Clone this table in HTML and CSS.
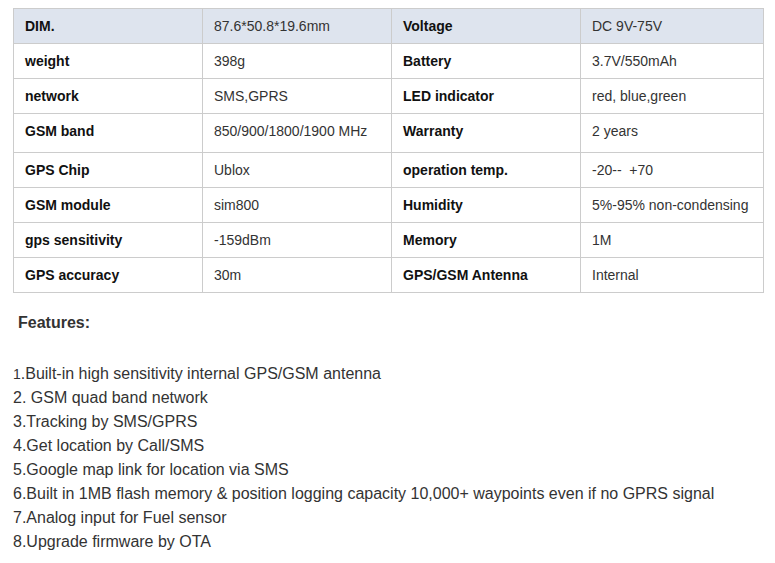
FILE: index.html
```html
<!DOCTYPE html>
<html>
<head>
<meta charset="utf-8">
<link rel="stylesheet" href="styles.css">
</head>
<body>
<div class="page">
  <table class="specs">
    <colgroup>
      <col class="c1"><col class="c2"><col class="c3"><col class="c4">
    </colgroup>
    <tr class="head">
      <th>DIM.</th><td>87.6*50.8*19.6mm</td><th>Voltage</th><td>DC 9V-75V</td>
    </tr>
    <tr>
      <th>weight</th><td>398g</td><th>Battery</th><td>3.7V/550mAh</td>
    </tr>
    <tr>
      <th>network</th><td>SMS,GPRS</td><th>LED indicator</th><td>red, blue,green</td>
    </tr>
    <tr class="tall">
      <th>GSM band</th><td>850/900/1800/1900 MHz</td><th>Warranty</th><td>2 years</td>
    </tr>
    <tr>
      <th>GPS Chip</th><td>Ublox</td><th>operation temp.</th><td>-20--&nbsp; +70</td>
    </tr>
    <tr>
      <th>GSM module</th><td>sim800</td><th>Humidity</th><td>5%-95% non-condensing</td>
    </tr>
    <tr>
      <th>gps sensitivity</th><td>-159dBm</td><th>Memory</th><td>1M</td>
    </tr>
    <tr>
      <th>GPS accuracy</th><td>30m</td><th>GPS/GSM Antenna</th><td>Internal</td>
    </tr>
  </table>

  <div class="features-title">Features:</div>

  <div class="features">
    <p><span class="small">1</span>.Built-in high sensitivity internal GPS/GSM antenna</p>
    <p>2. GSM quad band network</p>
    <p>3.Tracking by SMS/GPRS</p>
    <p>4.Get location by Call/SMS</p>
    <p>5.Google map link for location via SMS</p>
    <p>6.Built in 1MB flash memory &amp; position logging capacity 10,000+ waypoints even if no GPRS signal</p>
    <p>7.Analog input for Fuel sensor</p>
    <p>8.Upgrade firmware by OTA</p>
  </div>
</div>
</body>
</html>
```

FILE: styles.css
```css
html, body {
  margin: 0;
  padding: 0;
  background: #ffffff;
}

.page {
  padding: 8px 0 0 13px;
  font-family: "Liberation Sans", Arial, sans-serif;
  color: #333333;
}

.specs {
  border-collapse: collapse;
  width: 750px;
  table-layout: fixed;
  font-size: 14px;
}

.c1, .c2, .c3 { width: 189px; }
.c4 { width: 183px; }

.specs th,
.specs td {
  border: 1px solid #cccccc;
  height: 35px;
  padding: 0 11px;
  text-align: left;
  vertical-align: middle;
  box-sizing: border-box;
  white-space: nowrap;
}

.specs th {
  font-weight: bold;
  color: #111111;
}

.specs td {
  color: #333333;
}

.specs .head th,
.specs .head td {
  background: #dee4ee;
}

.specs .tall th,
.specs .tall td {
  height: 39px;
  padding-bottom: 4px;
}

.features-title {
  margin-top: 18px;
  padding-left: 5px;
  font-size: 16px;
  font-weight: bold;
  line-height: 24px;
  color: #333333;
}

.features {
  margin-top: 27px;
  font-size: 16px;
  line-height: 24px;
  color: #333333;
}

.features p {
  margin: 0;
}

.small {
  font-size: 14px;
}
```
